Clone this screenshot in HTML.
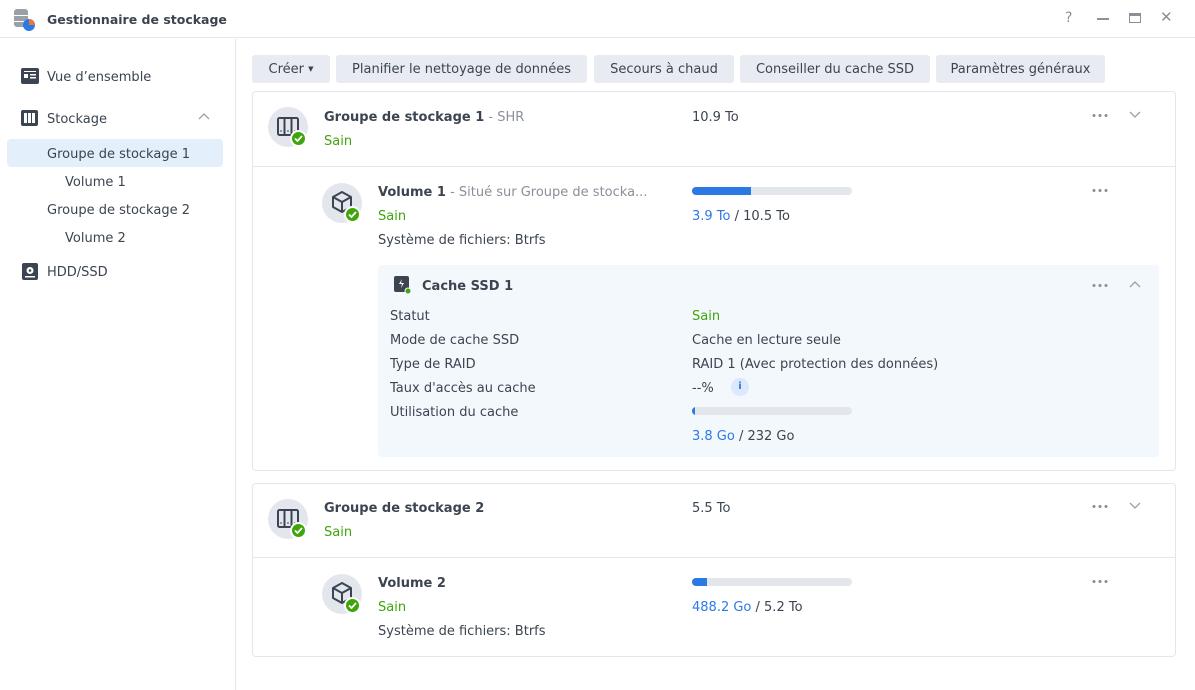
<!DOCTYPE html>
<html><head><meta charset="utf-8"><style>
*{box-sizing:border-box;margin:0;padding:0}
body{width:1195px;height:690px;overflow:hidden;background:#fff;font-family:"DejaVu Sans","Liberation Sans",sans-serif;font-size:13px;line-height:19px;color:#3b4450;position:relative}
.a{position:absolute;white-space:nowrap}
.b{font-weight:bold;color:#3b4450}
.g{color:#3ea60a}
.bl{color:#2b7ae4}
.gr{color:#8a9099}
.btn{position:absolute;top:55px;height:28px;background:#e8ecf2;border-radius:3px;line-height:29px;text-align:center;color:#3b4450}
.card{position:absolute;left:252px;width:924px;border:1px solid #e3e6ea;border-radius:4px}
.ic{position:absolute;width:40px;height:40px;border-radius:50%;background:#e3e6ec}
.ck{position:absolute;width:17px;height:17px;border-radius:50%;background:#3ea60a;border:2px solid #fff}
.bar{position:absolute;width:160px;height:8px;border-radius:4px;background:#e3e6ea;overflow:hidden}
.bar i{display:block;height:100%;background:#2b7ae4}
.dots{position:absolute;width:17px;height:3px;background:radial-gradient(circle,#8a9099 1.4px,transparent 1.6px) 0 0/6px 3px repeat-x}
</style></head><body>
<div class="a" style="left:0;top:0;width:1195px;height:38px;border-bottom:1px solid #e3e6ea"></div>
<svg class="a" style="left:13px;top:8px" width="24" height="24"><rect x="1" y="1" width="14" height="18" rx="3" fill="#9aa0a8"/><rect x="1" y="7" width="14" height="1" fill="#fff"/><rect x="1" y="13" width="14" height="1" fill="#fff"/><circle cx="16" cy="17" r="6" fill="#2b7ae4"/><path d="M16 17V11A6 6 0 0 1 22 17Z" fill="#f2733a"/></svg>
<div class="a b" style="left:47px;top:10px;font-size:12.5px">Gestionnaire de stockage</div>
<div class="a gr" style="left:1065px;top:9px;font-size:14px">?</div>
<div class="a" style="left:1097px;top:18px;width:12px;height:2px;background:#8a9099"></div>
<div class="a" style="left:1129px;top:13px;width:12px;height:10px;border:1.5px solid #8a9099;border-top-width:3px"></div>
<div class="a gr" style="left:1160px;top:8px;font-size:15px">✕</div>
<div class="a" style="left:235px;top:39px;width:1px;height:651px;background:#e3e6ea"></div>
<svg class="a" style="left:21px;top:68px" width="18" height="16"><rect x="0" y="0" width="18" height="16" rx="2" fill="#3b4450"/><rect x="3" y="6" width="4" height="4" fill="#fff"/><rect x="9" y="6" width="6" height="1.5" fill="#fff"/><rect x="9" y="9" width="6" height="1.5" fill="#fff"/><rect x="3" y="3" width="12" height="1" fill="#fff"/></svg>
<div class="a" style="left:47px;top:68px">Vue d’ensemble</div>
<svg class="a" style="left:21px;top:110px" width="17" height="16"><rect x="0" y="0" width="17" height="16" rx="2" fill="#3b4450"/><rect x="3" y="3" width="3" height="10" fill="#fff"/><rect x="7" y="3" width="3" height="10" fill="#fff"/><rect x="11" y="3" width="3" height="10" fill="#fff"/></svg>
<div class="a" style="left:47px;top:110px">Stockage</div>
<svg class="a" style="left:198px;top:113px" width="12" height="8"><path d="M1 6L6 1L11 6" stroke="#9aa0a8" fill="none" stroke-width="1.3"/></svg>
<div class="a" style="left:7px;top:139px;width:216px;height:28px;background:#e3effb;border-radius:4px"></div>
<div class="a" style="left:47px;top:145px">Groupe de stockage 1</div>
<div class="a" style="left:65px;top:173px">Volume 1</div>
<div class="a" style="left:47px;top:201px">Groupe de stockage 2</div>
<div class="a" style="left:65px;top:229px">Volume 2</div>
<svg class="a" style="left:22px;top:263px" width="16" height="17"><rect x="0" y="0" width="16" height="17" rx="2" fill="#3b4450"/><circle cx="8" cy="7.5" r="3.5" fill="#fff"/><circle cx="8" cy="7.5" r="1.3" fill="#3b4450"/><rect x="3" y="13" width="10" height="1.5" fill="#fff"/></svg>
<div class="a" style="left:47px;top:263px">HDD/SSD</div>
<div class="btn" style="left:252px;width:78px">Créer <span style="font-size:7px;vertical-align:2px">▼</span></div>
<div class="btn" style="left:336px;width:251px">Planifier le nettoyage de données</div>
<div class="btn" style="left:594px;width:140px">Secours à chaud</div>
<div class="btn" style="left:740px;width:190px">Conseiller du cache SSD</div>
<div class="btn" style="left:936px;width:169px">Paramètres généraux</div>
<div class="card" style="top:91px;height:380px"></div>
<div class="a" style="left:253px;top:166px;width:922px;height:1px;background:#e3e6ea"></div>
<div class="ic" style="left:268px;top:107px"></div>
<svg class="a" style="left:277px;top:117px" width="22" height="20"><rect x="1" y="1" width="20" height="17" rx="1.5" fill="none" stroke="#3b4450" stroke-width="2"/><path d="M7.5 1V18M14.5 1V18" stroke="#3b4450" stroke-width="2"/><path d="M3 14h2M10 14h2M17 14h2" stroke="#3b4450"/></svg>
<div class="ck" style="left:290px;top:130px"></div><svg class="a" style="left:294px;top:135px" width="9" height="7"><path d="M1 3.5L3.5 6L8 1" stroke="#fff" stroke-width="1.8" fill="none"/></svg>
<div class="a" style="left:324px;top:108px"><span class="b">Groupe de stockage 1</span> <span class="gr">- SHR</span></div>
<div class="a g" style="left:324px;top:132px">Sain</div>
<div class="a" style="left:692px;top:108px">10.9 To</div>
<div class="dots" style="left:1091px;top:114px"></div>
<svg class="a" style="left:1129px;top:111px" width="12" height="8"><path d="M1 1L6 6L11 1" stroke="#9aa0a8" fill="none" stroke-width="1.3"/></svg>
<div class="ic" style="left:322px;top:183px"></div>
<svg class="a" style="left:330px;top:190px" width="24" height="24"><path d="M12 2L21 7V17L12 22L3 17V7Z M3 7L12 12L21 7 M12 12V22" stroke="#3b4450" stroke-width="2" fill="none" stroke-linejoin="round"/></svg>
<div class="ck" style="left:344px;top:206px"></div><svg class="a" style="left:348px;top:211px" width="9" height="7"><path d="M1 3.5L3.5 6L8 1" stroke="#fff" stroke-width="1.8" fill="none"/></svg>
<div class="a" style="left:378px;top:183px"><span class="b">Volume 1</span> <span class="gr">- Situé sur Groupe de stocka...</span></div>
<div class="a g" style="left:378px;top:207px">Sain</div>
<div class="a" style="left:378px;top:231px">Système de fichiers: Btrfs</div>
<div class="bar" style="left:692px;top:187px"><i style="width:59px"></i></div>
<div class="a" style="left:692px;top:207px"><span class="bl">3.9 To</span> / 10.5 To</div>
<div class="dots" style="left:1091px;top:189px"></div>
<div class="a" style="left:378px;top:265px;width:781px;height:192px;background:#f3f8fd;border-radius:4px"></div>
<svg class="a" style="left:394px;top:276px" width="18" height="18"><rect x="0" y="0" width="15" height="16" rx="2" fill="#3b4450"/><path d="M8 3L5 8H8L7 12L10 7H7Z" fill="#fff"/><circle cx="14" cy="15" r="3" fill="#3ea60a" stroke="#f3f8fd" stroke-width="1"/></svg>
<div class="a b" style="left:422px;top:277px">Cache SSD 1</div>
<div class="dots" style="left:1091px;top:284px"></div>
<svg class="a" style="left:1129px;top:281px" width="12" height="8"><path d="M1 6L6 1L11 6" stroke="#9aa0a8" fill="none" stroke-width="1.3"/></svg>
<div class="a" style="left:390px;top:307px">Statut</div><div class="a g" style="left:692px;top:307px">Sain</div>
<div class="a" style="left:390px;top:331px">Mode de cache SSD</div><div class="a" style="left:692px;top:331px">Cache en lecture seule</div>
<div class="a" style="left:390px;top:355px">Type de RAID</div><div class="a" style="left:692px;top:355px">RAID 1 (Avec protection des données)</div>
<div class="a" style="left:390px;top:379px">Taux d'accès au cache</div><div class="a" style="left:692px;top:379px">--%</div>
<div class="a" style="left:731px;top:378px;width:18px;height:18px;border-radius:50%;background:#dce8fb;color:#2b7ae4;font-size:10px;font-weight:bold;text-align:center;line-height:18px">i</div>
<div class="a" style="left:390px;top:403px">Utilisation du cache</div>
<div class="bar" style="left:692px;top:407px"><i style="width:3px"></i></div>
<div class="a" style="left:692px;top:427px"><span class="bl">3.8 Go</span> / 232 Go</div>
<div class="card" style="top:483px;height:174px"></div>
<div class="a" style="left:253px;top:557px;width:922px;height:1px;background:#e3e6ea"></div>
<div class="ic" style="left:268px;top:499px"></div>
<svg class="a" style="left:277px;top:509px" width="22" height="20"><rect x="1" y="1" width="20" height="17" rx="1.5" fill="none" stroke="#3b4450" stroke-width="2"/><path d="M7.5 1V18M14.5 1V18" stroke="#3b4450" stroke-width="2"/><path d="M3 14h2M10 14h2M17 14h2" stroke="#3b4450"/></svg>
<div class="ck" style="left:290px;top:522px"></div><svg class="a" style="left:294px;top:527px" width="9" height="7"><path d="M1 3.5L3.5 6L8 1" stroke="#fff" stroke-width="1.8" fill="none"/></svg>
<div class="a b" style="left:324px;top:499px">Groupe de stockage 2</div>
<div class="a g" style="left:324px;top:523px">Sain</div>
<div class="a" style="left:692px;top:499px">5.5 To</div>
<div class="dots" style="left:1091px;top:505px"></div>
<svg class="a" style="left:1129px;top:502px" width="12" height="8"><path d="M1 1L6 6L11 1" stroke="#9aa0a8" fill="none" stroke-width="1.3"/></svg>
<div class="ic" style="left:322px;top:574px"></div>
<svg class="a" style="left:330px;top:581px" width="24" height="24"><path d="M12 2L21 7V17L12 22L3 17V7Z M3 7L12 12L21 7 M12 12V22" stroke="#3b4450" stroke-width="2" fill="none" stroke-linejoin="round"/></svg>
<div class="ck" style="left:344px;top:597px"></div><svg class="a" style="left:348px;top:602px" width="9" height="7"><path d="M1 3.5L3.5 6L8 1" stroke="#fff" stroke-width="1.8" fill="none"/></svg>
<div class="a b" style="left:378px;top:574px">Volume 2</div>
<div class="a g" style="left:378px;top:598px">Sain</div>
<div class="a" style="left:378px;top:622px">Système de fichiers: Btrfs</div>
<div class="bar" style="left:692px;top:578px"><i style="width:15px"></i></div>
<div class="a" style="left:692px;top:598px"><span class="bl">488.2 Go</span> / 5.2 To</div>
<div class="dots" style="left:1091px;top:580px"></div>
</body></html>
